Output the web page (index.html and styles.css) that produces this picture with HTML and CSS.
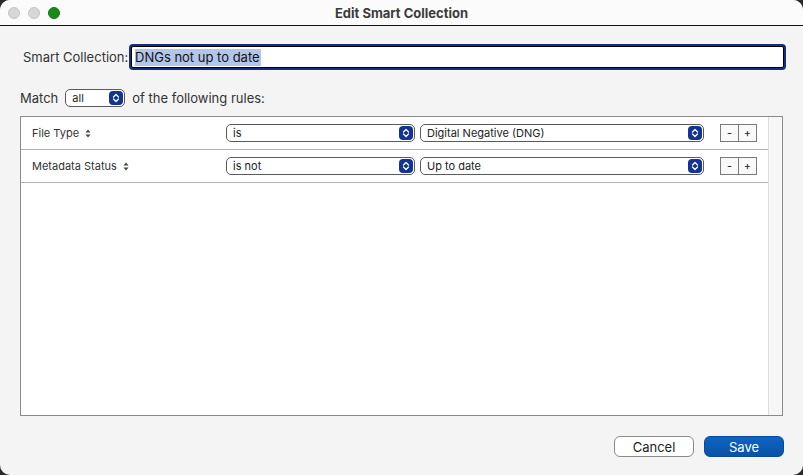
FILE: index.html
```html
<!DOCTYPE html>
<html>
<head>
<meta charset="utf-8">
<link rel="stylesheet" href="styles.css">
</head>
<body>
<div class="window">
  <div class="titlebar">
    <div class="lights">
      <span class="light gray"></span>
      <span class="light gray"></span>
      <span class="light green"></span>
    </div>
    <div class="title">Edit Smart Collection</div>
  </div>
  <div class="content">
    <div class="name-row">
      <span class="label">Smart Collection:</span>
      <div class="name-input"><span class="sel">DNGs not up to date</span></div>
    </div>
    <div class="match-row">
      <span>Match</span>
      <div class="popup small">
        <span class="popup-text">all</span>
        <span class="stepper"><svg width="8" height="10" viewBox="0 0 8 10"><path d="M1.5 4 L4 1.5 L6.5 4 M1.5 6 L4 8.5 L6.5 6" fill="none" stroke="#fff" stroke-width="1.3" stroke-linecap="round" stroke-linejoin="round"/></svg></span>
      </div>
      <span>of the following rules:</span>
    </div>
    <div class="rules">
      <div class="rules-main">
        <div class="rule">
          <div class="field">File Type <svg class="updown" width="6" height="9" viewBox="0 0 6 9"><path d="M0.5 3.5 L3 0.5 L5.5 3.5 Z M0.5 5.5 L3 8.5 L5.5 5.5 Z" fill="#444"/></svg></div>
          <div class="popup op">
            <span class="popup-text">is</span>
            <span class="stepper"><svg width="8" height="10" viewBox="0 0 8 10"><path d="M1.5 4 L4 1.5 L6.5 4 M1.5 6 L4 8.5 L6.5 6" fill="none" stroke="#fff" stroke-width="1.3" stroke-linecap="round" stroke-linejoin="round"/></svg></span>
          </div>
          <div class="popup val">
            <span class="popup-text">Digital Negative (DNG)</span>
            <span class="stepper"><svg width="8" height="10" viewBox="0 0 8 10"><path d="M1.5 4 L4 1.5 L6.5 4 M1.5 6 L4 8.5 L6.5 6" fill="none" stroke="#fff" stroke-width="1.3" stroke-linecap="round" stroke-linejoin="round"/></svg></span>
          </div>
          <div class="pm"><span>-</span><span>+</span></div>
        </div>
        <div class="rule">
          <div class="field">Metadata Status <svg class="updown" width="6" height="9" viewBox="0 0 6 9"><path d="M0.5 3.5 L3 0.5 L5.5 3.5 Z M0.5 5.5 L3 8.5 L5.5 5.5 Z" fill="#444"/></svg></div>
          <div class="popup op">
            <span class="popup-text">is not</span>
            <span class="stepper"><svg width="8" height="10" viewBox="0 0 8 10"><path d="M1.5 4 L4 1.5 L6.5 4 M1.5 6 L4 8.5 L6.5 6" fill="none" stroke="#fff" stroke-width="1.3" stroke-linecap="round" stroke-linejoin="round"/></svg></span>
          </div>
          <div class="popup val">
            <span class="popup-text">Up to date</span>
            <span class="stepper"><svg width="8" height="10" viewBox="0 0 8 10"><path d="M1.5 4 L4 1.5 L6.5 4 M1.5 6 L4 8.5 L6.5 6" fill="none" stroke="#fff" stroke-width="1.3" stroke-linecap="round" stroke-linejoin="round"/></svg></span>
          </div>
          <div class="pm"><span>-</span><span>+</span></div>
        </div>
      </div>
      <div class="scrolltrack"></div>
    </div>
    <div class="buttons">
      <button class="btn cancel">Cancel</button>
      <button class="btn save">Save</button>
    </div>
  </div>
</div>
</body>
</html>
```
FILE: styles.css
```css
html, body {
  margin: 0;
  padding: 0;
  background: #2b2b2b;
}
body {
  font-family: Inter, "Liberation Sans", sans-serif;
  color: #222;
}
.window {
  width: 803px;
  height: 475px;
  background: #f4f4f4;
  border-radius: 10px;
  overflow: hidden;
  display: flex;
  flex-direction: column;
}
.titlebar {
  height: 25px;
  background: #fbfbfb;
  border-bottom: 1px solid #141414;
  display: flex;
  align-items: center;
  position: relative;
  flex: none;
}
.lights {
  display: flex;
  gap: 8px;
  padding-left: 8px;
  padding-top: 0px;
}
.light {
  width: 12px;
  height: 12px;
  border-radius: 50%;
  box-sizing: border-box;
}
.light.gray {
  background: #d7d7d7;
  border: 1px solid #c4c4c4;
}
.light.green {
  background: #178c18;
  border: 1px solid #10760f;
}
.title {
  position: absolute;
  left: 0;
  right: 0;
  top: 0;
  bottom: 0;
  display: flex;
  align-items: center;
  justify-content: center;
  font-weight: 700;
  font-size: 13px;
  color: #3b3b3b;
  pointer-events: none;
}
.content {
  flex: 1;
  display: flex;
  flex-direction: column;
  padding: 20px 19px 18px 20px;
}
.name-row {
  display: flex;
  align-items: center;
  height: 22px;
  font-size: 13px;
  color: #333;
}
.name-row .label {
  margin-left: 3px;
  width: 108px;
  flex: none;
}
.name-input {
  flex: 1;
  height: 22px;
  box-sizing: border-box;
  background: #fff;
  border: 1.5px solid #000;
  box-shadow: 0 0 0 2px #142e83;
  border-radius: 2px;
  display: flex;
  align-items: center;
  padding-left: 3px;
  margin-right: 0px;
}
.name-input .sel {
  background: #b2c6ea;
  color: #111;
  font-size: 13px;
  line-height: 17px;
  padding-right: 1px;
}
.match-row {
  display: flex;
  align-items: center;
  gap: 7px;
  margin-top: 21px;
  height: 18px;
  font-size: 13px;
  color: #333;
}
.popup {
  box-sizing: border-box;
  height: 18px;
  background: #fff;
  border: 1px solid #5a5a5a;
  border-radius: 5px;
  display: flex;
  align-items: center;
  justify-content: space-between;
  padding: 0 1px 0 6px;
  font-size: 11px;
  color: #222;
}
.popup.small {
  width: 60px;
}
.stepper {
  width: 14px;
  height: 14px;
  background: #133491;
  border-radius: 4px;
  display: flex;
  align-items: center;
  justify-content: center;
}
.rules {
  margin-top: 9px;
  height: 300px;
  box-sizing: border-box;
  border: 1px solid #8a8a8a;
  background: #fff;
  display: flex;
  margin-right: 1px;
}
.rules-main {
  flex: 1;
}
.scrolltrack {
  width: 13px;
  background: #f7f7f7;
  border-left: 1px solid #dedede;
}
.rule {
  height: 32px;
  border-bottom: 1px solid #b3b3b3;
  display: flex;
  align-items: center;
  padding-left: 11px;
}
.field {
  width: 194px;
  flex: none;
  font-size: 11px;
  color: #333;
  display: flex;
  align-items: center;
  gap: 6px;
}
.popup.op {
  width: 189px;
  flex: none;
}
.popup.val {
  width: 284px;
  flex: none;
  margin-left: 5px;
}
.pm {
  display: flex;
  margin-left: 16px;
}
.pm span {
  width: 19px;
  height: 18px;
  box-sizing: border-box;
  border: 1px solid #7a7a7a;
  background: #f9f9f9;
  display: flex;
  align-items: center;
  justify-content: center;
  font-size: 11px;
  color: #222;
}
.pm span + span {
  margin-left: -1px;
}
.buttons {
  margin-top: auto;
  display: flex;
  justify-content: flex-end;
  gap: 10px;
}
.btn {
  width: 80px;
  height: 21px;
  border-radius: 6px;
  font-family: Inter, "Liberation Sans", sans-serif;
  font-size: 13px;
  padding: 0;
  box-sizing: border-box;
}
.cancel {
  background: #fff;
  border: 1px solid #8a8a8a;
  color: #222;
}
.save {
  background: linear-gradient(#0d64c4, #0a52a6);
  border: 1px solid #0a4c99;
  color: #fff;
}
```
